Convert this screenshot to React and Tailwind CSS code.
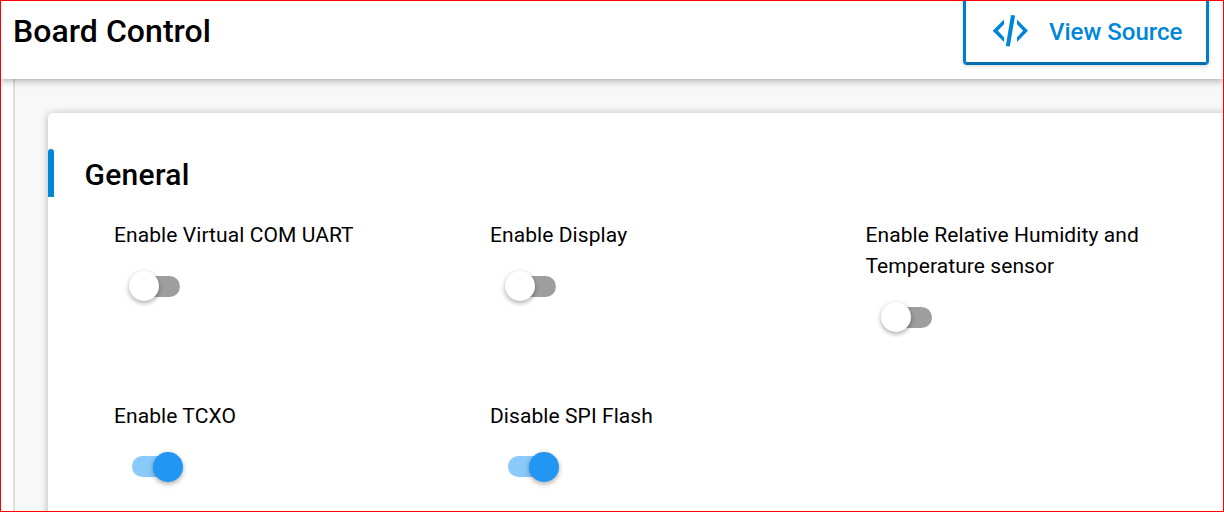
const Toggle = ({ on }) => (
  <span role="switch" aria-checked={on} className={on ? "relative block h-[21px] w-12 rounded-full bg-[#8acafa]" : "relative block h-[21px] w-12 rounded-full bg-[#9e9e9e]"}>
    <span className={on ? "absolute -top-[4px] left-[21px] h-[30px] w-[30px] rounded-full bg-[#2196f3] shadow-[0_2px_5px_rgba(0,0,0,0.35)]" : "absolute -top-[5px] -left-[3px] h-[30px] w-[30px] rounded-full bg-white shadow-[0_2px_5px_rgba(0,0,0,0.35)]"} />
  </span>
);

const settings = [
  { label: "Enable Virtual COM UART", on: false },
  { label: "Enable Display", on: false },
  { label: "Enable Relative Humidity and Temperature sensor", on: false },
  { label: "Enable TCXO", on: true },
  { label: "Disable SPI Flash", on: true },
];

export default function App() {
  return (
    <div className="relative flex h-[512px] w-[1224px] flex-col overflow-hidden bg-white font-['Roboto',sans-serif] text-black">
      <header className="z-10 flex h-[79px] shrink-0 items-start justify-between bg-white pr-[15px] pl-[13px] shadow-[0_1px_8px_rgba(0,0,0,0.38)]">
        <h1 className="pt-[11px] text-[32px] leading-[40px] font-medium tracking-[0.05px]">Board Control</h1>
        <button className="-mt-[3px] flex h-[68px] w-[246px] items-center rounded-[4px] border-3 border-[#007ecb] border-b-[#006fb2] pl-[26px] text-[#0086d9] shadow-[0_1px_4px_rgba(0,0,0,0.18)]">
          <svg width="36" height="32" viewBox="0 0 36 32" fill="currentColor">
            <path d="M12 4.5V9.3L5.9 15.7 12 22.2V27L.7 15.7zM25 4.5v4.8l6.1 6.4-6.1 6.5V27l11-11.3zM19 0l4.1.6-5.3 31-4-.6z" />
          </svg>
          <span className="ml-[21px] pt-[2px] text-[24px] font-medium whitespace-nowrap">View Source</span>
        </button>
      </header>
      <main className="flex grow pl-[13px]">
        <div className="grow border-l-2 border-[#dedede] bg-[#f8f8f8] pt-[34px] pl-[33px]">
          <section className="h-[450px] w-[1250px] rounded-[5px] bg-white pt-9 shadow-[0_1px_8px_rgba(0,0,0,0.28)]">
            <div className="flex h-12 items-center">
              <span className="h-12 w-1.5 rounded-t-[3px] bg-[#0086d9]" />
              <h2 className="pt-[2px] pl-[30.5px] text-[30px] font-medium tracking-[0.3px]">General</h2>
            </div>
            <div className="grid grid-cols-[376px_375.5px_376px] grid-rows-[181px_181px] pt-[22px] pl-[66px]">
              {settings.map(({ label, on }) => (
                <div key={label}>
                  <p className="w-[300px] pt-px text-[21px] leading-[31px] tracking-[0.08px]">{label}</p>
                  <div className={on ? "pt-[24px] pl-[18px]" : "pt-[25px] pl-[18px]"}><Toggle on={on} /></div>
                </div>
              ))}
            </div>
          </section>
        </div>
      </main>
      <div className="pointer-events-none absolute inset-0 z-20 border border-[#ff0000]" />
    </div>
  );
}
